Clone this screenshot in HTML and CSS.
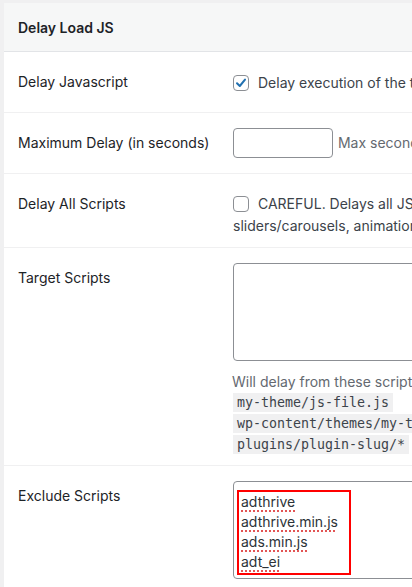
FILE: index.html
```html
<!DOCTYPE html>
<html lang="en">
<head>
  <meta charset="UTF-8">
  <meta name="viewport" content="width=device-width, initial-scale=1.0">
  <title>Delay Load JS</title>
  <link rel="stylesheet" href="styles.css">
</head>
<body>
  <div class="card">
    <div class="card-header">Delay Load JS</div>

    <div class="row">
      <div class="label">Delay Javascript</div>
      <div class="control check-cell">
        <span class="checkbox checked">
          <svg width="14" height="14" viewBox="0 0 14 14"><path d="M3 7.2 L5.8 10 L11 3.6" fill="none" stroke="#2271b1" stroke-width="2" stroke-linecap="round" stroke-linejoin="round"/></svg>
        </span>
        <span class="check-text">Delay execution of the target JavaScript files until user interaction.</span>
      </div>
    </div>

    <div class="row">
      <div class="label">Maximum Delay (in seconds)</div>
      <div class="control">
        <input type="text" class="small-input">
        <span class="hint">Max seconds to delay execution of scripts.</span>
      </div>
    </div>

    <div class="row">
      <div class="label">Delay All Scripts</div>
      <div class="control check-cell wrap">
        <p class="check-para"><span class="checkbox"></span>CAREFUL. Delays all JS files except excluded scripts. This may break</p>
        <p class="check-para">sliders/carousels, animations and other scripts loaded on the page.</p>
      </div>
    </div>

    <div class="row">
      <div class="label">Target Scripts</div>
      <div class="control target-cell">
        <div class="textarea"></div>
        <p class="description">Will delay from these scripts. One per line, partial matches allowed.</p>
        <div class="code-lines">
          <div><code>my-theme/js-file.js</code></div>
          <div><code>wp-content/themes/my-theme/js-file.js</code></div>
          <div><code>plugins/plugin-slug/*</code> for all</div>
        </div>
      </div>
    </div>

    <div class="row">
      <div class="label">Exclude Scripts</div>
      <div class="control">
        <div class="textarea filled">
          <div class="highlight">
            <div class="line"><span class="typo">adthrive</span></div>
            <div class="line"><span class="typo">adthrive.min.js</span></div>
            <div class="line"><span class="typo">ads.min.js</span></div>
            <div class="line"><span class="typo">adt_ei</span></div>
          </div>
        </div>
      </div>
    </div>
  </div>
</body>
</html>
```

FILE: styles.css
```css
body {
  margin: 0;
  padding: 3px 0 0 4px;
  background-color: #f0f0f1;
  font-family: Inter, "Noto Sans", sans-serif;
  font-size: 14px;
  color: #1d2327;
  overflow: hidden;
}

.card {
  width: 760px;
  background-color: #fff;
}

.card-header {
  background-color: #f6f7f7;
  border-bottom: 1px solid #e2e4e7;
  padding: 0 14px;
  height: 48px;
  line-height: 50px;
  font-weight: 600;
}

.row {
  display: grid;
  grid-template-columns: 229px 1fr;
  border-bottom: 1px solid #f0f0f1;
}

.label {
  padding: 20px 0 20px 14px;
  line-height: 20px;
}

.control {
  padding: 15px 0 15px 0;
  line-height: 20px;
}

.check-cell {
  padding: 20px 0 19px 0;
  display: flex;
  align-items: center;
  white-space: nowrap;
  color: #3c434a;
}

.check-cell.wrap {
  display: block;
  padding: 19px 0 10px 0;
}

.check-para {
  margin: 0;
  line-height: 22px;
}

.checkbox {
  display: inline-flex;
  align-items: center;
  justify-content: center;
  width: 14px;
  height: 14px;
  border: 1px solid #8c8f94;
  border-radius: 4px;
  margin-right: 9px;
  vertical-align: -3px;
  background-color: #fff;
}

.small-input {
  width: 100px;
  height: 30px;
  box-sizing: border-box;
  border: 1px solid #8c8f94;
  border-radius: 4px;
  margin: 0;
  vertical-align: middle;
}

.hint {
  color: #646970;
  margin-left: 1px;
  vertical-align: middle;
  white-space: nowrap;
}

.textarea {
  box-sizing: border-box;
  width: 400px;
  height: 98px;
  border: 1px solid #8c8f94;
  border-radius: 4px;
  background-color: #fff;
}

.target-cell {
  padding-bottom: 11px;
}

.description {
  margin: 11px 0 0 -1px;
  color: #646970;
  white-space: nowrap;
}

.code-lines {
  margin-top: -1px;
  line-height: 21px;
  white-space: nowrap;
  color: #646970;
}

code {
  font-family: "DejaVu Sans Mono", monospace;
  font-size: 13.3px;
  line-height: 1;
  background-color: #f0f0f1;
  color: #3c434a;
  padding: 2px 4px;
}

.textarea.filled {
  padding: 8px 0 0 3px;
}

.highlight {
  width: 108px;
  border: 2px solid #f00;
  padding: 0 0 1px 2px;
  color: #2c3338;
}

.line {
  line-height: 20px;
}

.typo {
  text-decoration: underline dotted #e25555;
  text-decoration-thickness: 2px;
  text-underline-offset: 3px;
}
```
